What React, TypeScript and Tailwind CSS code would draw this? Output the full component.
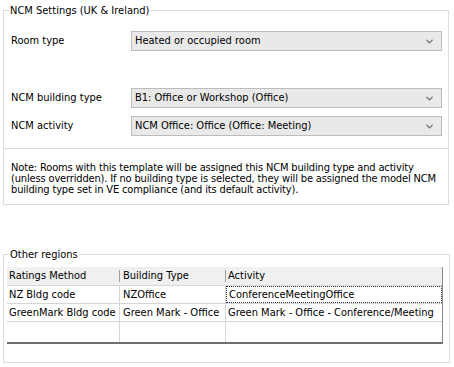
import { ChevronDown } from 'lucide-react';

const font = { fontFamily: 'Tahoma, "DejaVu Sans Condensed", "Liberation Sans", sans-serif' };

function Select({ value }: { value: string }) {
  return (
    <div className="flex h-[20px] w-[311px] items-center justify-between border border-[#bcbcbc] bg-[#e9e9e9] pl-[3px] pr-[6px]">
      <span>{value}</span>
      <ChevronDown size={11} strokeWidth={2.5} className="text-[#666]" />
    </div>
  );
}

function Row({ label, value, className = '' }: { label: string; value: string; className?: string }) {
  return (
    <div className={`flex items-center ${className}`}>
      <span className="w-[122px] pl-[2px]">{label}</span>
      <Select value={value} />
    </div>
  );
}

const rows = [
  ['NZ Bldg code', 'NZOffice', 'ConferenceMeetingOffice'],
  ['GreenMark Bldg code', 'Green Mark - Office', 'Green Mark - Office - Conference/Meeting'],
];

export default function App() {
  return (
    <div className="h-[367px] w-[454px] bg-white text-[11px] leading-[12px] text-black" style={font}>
      {/* NCM settings group */}
      <fieldset className="ml-[3px] mt-[4px] w-[446px] border border-[#dcdcdc] px-[5px]">
        <legend className="px-[1px] leading-[13px]">NCM Settings (UK &amp; Ireland)</legend>
        <div className="pt-[14px]">
          <Row label="Room type" value="Heated or occupied room" />
          <Row label="NCM building type" value="B1: Office or Workshop (Office)" className="mt-[37px]" />
          <Row label="NCM activity" value="NCM Office: Office (Office: Meeting)" className="mt-[8px]" />
        </div>
        <div className="-mx-[5px] mt-[12px] border-t border-[#dcdcdc] pb-[9px] pl-[7px] pr-0 pt-[13px] leading-[11px] tracking-[-0.15px]">
          Note: Rooms with this template will be assigned this NCM building type and activity (unless overridden). If no building type is selected, they will be assigned the model NCM building type set in VE compliance (and its default activity).
        </div>
      </fieldset>

      {/* Other regions group */}
      <fieldset className="ml-[3px] mt-[43px] w-[447px] border border-[#dcdcdc] px-[3px] pb-[18px]">
        <legend className="ml-[2px] px-[1px] leading-[13px]">Other regions</legend>
        <div className="mt-[6px] w-[436px] border-b-2 border-r border-b-[#6d6d6d] border-r-[#8a8a8a]">
          <div className="grid h-[18px] grid-cols-[113px_106px_1fr] items-center bg-[#f0f0f0]">
            <div className="border-r border-[#a0a0a0] pl-[2px]">Ratings Method</div>
            <div className="border-r border-[#a0a0a0] pl-[3px]">Building Type</div>
            <div className="pl-[2px]">Activity</div>
          </div>
          {rows.map((r, i) => (
            <div key={r[0]} className="grid h-[18px] grid-cols-[113px_106px_1fr] border-t border-[#d6d6d6]">
              <div className="flex items-center border-r border-[#d6d6d6] pl-[2px]">{r[0]}</div>
              <div className="flex items-center border-r border-[#d6d6d6] pl-[3px]">{r[1]}</div>
              <div className={`flex items-center pl-[2px] ${i === 0 ? 'border border-dotted border-[#333]' : ''}`}>{r[2]}</div>
            </div>
          ))}
          <div className="grid h-[21px] grid-cols-[113px_106px_1fr] border-t border-[#d6d6d6]">
            <div className="border-r border-[#d6d6d6]" />
            <div className="border-r border-[#d6d6d6]" />
            <div />
          </div>
        </div>
      </fieldset>
    </div>
  );
}
